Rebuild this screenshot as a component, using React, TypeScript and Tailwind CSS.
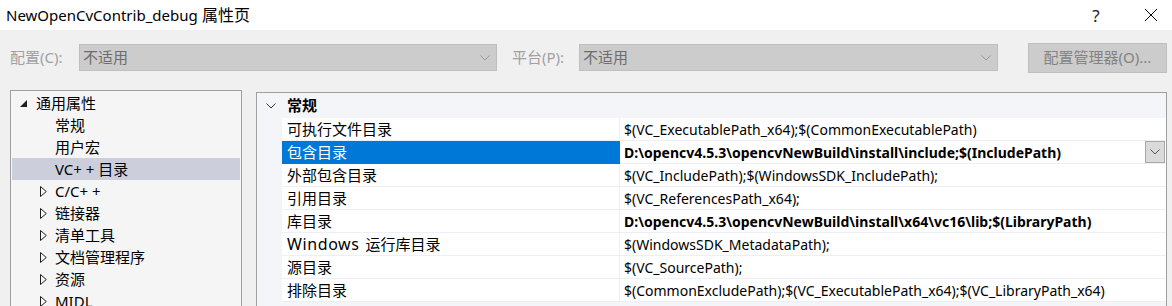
import React from "react";

const FONT = { fontFamily: '"Noto Sans", "Noto Sans CJK SC", sans-serif' };

function Chevron({ className = "" }: { className?: string }) {
  return (
    <svg width="10" height="6" viewBox="0 0 10 6" className={className}>
      <path d="M0.5 0.5 L5 5 L9.5 0.5" fill="none" stroke="currentColor" strokeWidth="1" />
    </svg>
  );
}

const treeItems: { label: string; kind: "open" | "leaf" | "closed"; sel?: boolean }[] = [
  { label: "通用属性", kind: "open" },
  { label: "常规", kind: "leaf" },
  { label: "用户宏", kind: "leaf" },
  { label: "VC+ + 目录", kind: "leaf", sel: true },
  { label: "C/C+ +", kind: "closed" },
  { label: "链接器", kind: "closed" },
  { label: "清单工具", kind: "closed" },
  { label: "文档管理程序", kind: "closed" },
  { label: "资源", kind: "closed" },
  { label: "MIDL", kind: "closed" },
];

const rows: { name: React.ReactNode; key: string; value: string; bold?: boolean; sel?: boolean }[] = [
  { key: "a", name: "可执行文件目录", value: "$(VC_ExecutablePath_x64);$(CommonExecutablePath)" },
  { key: "b", name: "包含目录", value: "D:\\opencv4.5.3\\opencvNewBuild\\install\\include;$(IncludePath)", bold: true, sel: true },
  { key: "c", name: "外部包含目录", value: "$(VC_IncludePath);$(WindowsSDK_IncludePath);" },
  { key: "d", name: "引用目录", value: "$(VC_ReferencesPath_x64);" },
  { key: "e", name: "库目录", value: "D:\\opencv4.5.3\\opencvNewBuild\\install\\x64\\vc16\\lib;$(LibraryPath)", bold: true },
  {
    key: "f",
    name: (
      <span>
        <span className="text-[16px] tracking-[0.6px]">Windows</span>
        <span className="ml-[6px]">运行库目录</span>
      </span>
    ),
    value: "$(WindowsSDK_MetadataPath);",
  },
  { key: "g", name: "源目录", value: "$(VC_SourcePath);" },
  { key: "h", name: "排除目录", value: "$(CommonExcludePath);$(VC_ExecutablePath_x64);$(VC_LibraryPath_x64)" },
];

export default function App() {
  return (
    <div className="w-[1172px] h-[306px] overflow-hidden bg-[#f0f0f0] text-[15px] text-black" style={FONT}>
      {/* Title bar */}
      <div className="h-[30px] bg-white flex items-center pl-[6px]">
        <span className="leading-none">
          <span className="text-[15px]">NewOpenCvContrib_debug</span>
          <span className="text-[16px]"> 属性页</span>
        </span>
        <div className="ml-auto flex items-center">
          <span className="text-[17px] leading-none w-[20px] text-center text-[#222]">?</span>
          <span className="w-[42px] ml-[24px] flex justify-center">
            <svg width="14" height="14" viewBox="0 0 14 14">
              <path d="M1 1 L13 13 M13 1 L1 13" stroke="#000" strokeWidth="1" />
            </svg>
          </span>
        </div>
      </div>

      {/* Toolbar */}
      <div className="h-[55px] flex items-center pl-[10px] pr-[5px] text-[15px]">
        <span className="text-[#a0a0a0] w-[69px]">配置(C):</span>
        <div className="w-[418px] h-[27px] bg-[#cccccc] border border-[#bfbfbf] flex items-center pl-[3px] pr-[6px]">
          <span className="text-[#6d6d6d]">不适用</span>
          <Chevron className="ml-auto text-[#9a9a9a]" />
        </div>
        <span className="text-[#a0a0a0] ml-[15px] w-[67px]">平台(P):</span>
        <div className="w-[419px] h-[27px] bg-[#cccccc] border border-[#bfbfbf] flex items-center pl-[3px] pr-[6px]">
          <span className="text-[#6d6d6d]">不适用</span>
          <Chevron className="ml-auto text-[#9a9a9a]" />
        </div>
        <div className="ml-auto w-[139px] h-[30px] bg-[#cccccc] border border-[#bfbfbf] flex items-center justify-center text-[#838383]">
          配置管理器(O)...
        </div>
      </div>

      {/* Main */}
      <div className="flex pl-[10px] pr-[5px] gap-[14px]">
        {/* Tree */}
        <div className="w-[232px] h-[230px] mt-[5px] bg-[#f5f5f5] border border-[#a0a0a0] pt-[1px] px-[1px]">
          {treeItems.map((it) => (
            <div
              key={it.label}
              className={`h-[22px] flex items-center ${it.sel ? "bg-[#cccedb]" : ""}`}
            >
              {it.kind === "open" ? (
                <>
                  <span className="w-[24px] shrink-0 flex pl-[8px]">
                    <svg width="7" height="7" viewBox="0 0 7 7">
                      <path d="M7 0 L7 7 L0 7 Z" fill="#1e1e1e" />
                    </svg>
                  </span>
                  <span>{it.label}</span>
                </>
              ) : it.kind === "closed" ? (
                <>
                  <span className="w-[43px] shrink-0 flex pl-[28px]">
                    <svg width="7" height="11" viewBox="0 0 7 11">
                      <path d="M0.5 0.5 L6.3 5.5 L0.5 10.5 Z" fill="none" stroke="#1e1e1e" strokeWidth="1" />
                    </svg>
                  </span>
                  <span>{it.label}</span>
                </>
              ) : (
                <span className="pl-[43px]">{it.label}</span>
              )}
            </div>
          ))}
        </div>

        {/* Property grid */}
        <div className="flex-1 h-[230px] mt-[7px] bg-[#f3f5f8] border-t border-l border-r border-[#a0a0a0] flex flex-col">
          <div className="h-[25px] flex items-center shrink-0">
            <span className="w-[26px] flex justify-center pl-[2px]">
              <Chevron className="text-[#333]" />
            </span>
            <span className="font-bold ml-[4px]">常规</span>
          </div>
          {rows.map((r) => (
            <div key={r.key} className="h-[23px] flex shrink-0 pl-[25px]">
              <div
                className={`w-[338px] flex items-center pl-[5px] border-b border-r ${
                  r.sel ? "bg-[#0078d7] text-white border-[#0078d7]" : "bg-white border-[#eceff3]"
                }`}
              >
                {r.name}
              </div>
              <div className="flex-1 bg-white flex items-center pl-[4px] border-b border-[#eceff3]">
                <span className={`text-[14px] ${r.bold ? "font-bold" : ""}`}>{r.value}</span>
                {r.sel && (
                  <span className="ml-auto mr-[1px] w-[20px] h-[22px] bg-[#dadada] border border-[#a8a8a8] flex items-center justify-center">
                    <Chevron className="text-[#555]" />
                  </span>
                )}
              </div>
            </div>
          ))}
          <div className="h-[25px] flex items-start pt-[1px] shrink-0">
            <span className="w-[26px] flex justify-center pl-[2px] pt-[8px]">
              <Chevron className="text-[#333]" />
            </span>
            <span className="font-bold ml-[4px]">外部生成系统</span>
          </div>
        </div>
      </div>
    </div>
  );
}
